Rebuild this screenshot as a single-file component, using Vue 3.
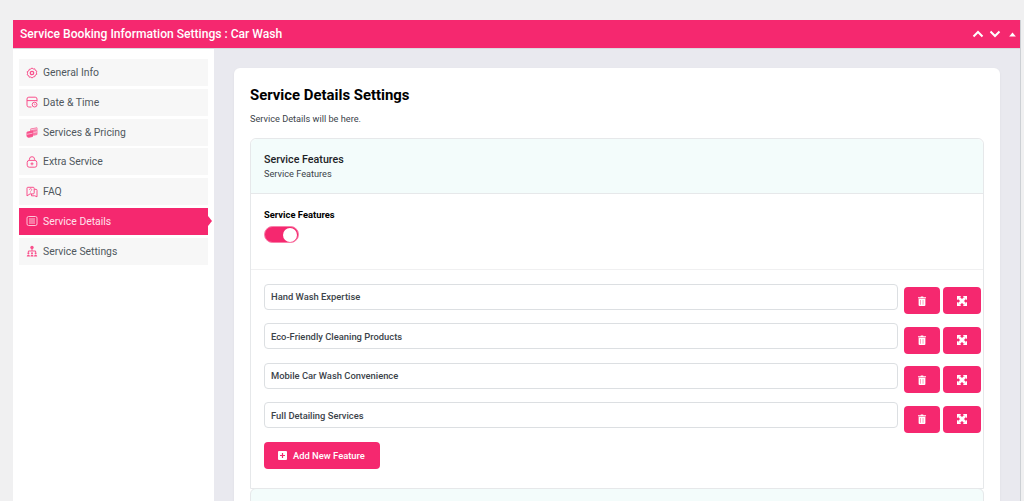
<template>
  <div class="page">
    <div class="panel">
      <div class="panel-head">
        <h2>Service Booking Information Settings : Car Wash</h2>
        <div class="head-icons">
          <svg width="12" height="8" viewBox="0 0 12 8"><path d="M1.5 6.500 6 2l4.500 4.500" fill="none" stroke="#fff" stroke-width="2" /></svg>
          <svg width="12" height="8" viewBox="0 0 12 8"><path d="M1.5 1.500 6 6l4.500-4.500" fill="none" stroke="#fff" stroke-width="2" /></svg>
          <svg width="7" height="5" viewBox="0 0 8 6"><path d="M4 .5 8 5.500H0z" fill="#fff" /></svg>
        </div>
      </div>
      <div class="panel-body">
        <ul class="side">
          <li v-for="item in tabs" :key="item.label" :class="{ active: item.label === 'Service Details' }">
            <svg class="side-icon" width="12" height="12" viewBox="0 0 12 12" fill="none" stroke="currentColor" stroke-width="1" v-html="item.icon"></svg>
            <span>{{ item.label }}</span>
          </li>
        </ul>
        <div class="content">
          <div class="card">
            <h1>Service Details Settings</h1>
            <p class="lead">Service Details will be here.</p>
            <div class="box">
              <div class="box-head">
                <h3>Service Features</h3>
                <p>Service Features</p>
              </div>
              <div class="toggle-row">
                <label>Service Features</label>
                <span class="toggle"><i></i></span>
              </div>
              <div class="features">
                <div class="feature" v-for="f in features" :key="f">
                  <input type="text" :value="f" />
                  <button class="del" type="button">
                    <svg width="8" height="10" viewBox="0 0 9 11"><path d="M0 1.200h2.800L3.200.3h2.600l.4.9H9v1.100H0zM.7 3h7.600v7a1 1 0 0 1-1 1H1.700a1 1 0 0 1-1-1zm1.900 1.300v5.400h.5V4.300zm2.800 0v5.400h.5V4.300z" fill="#fff" fill-rule="evenodd" /></svg>
                  </button>
                  <button class="move" type="button">
                    <svg width="10" height="10" viewBox="0 0 10 10"><path d="M2 2l6 6M8 2 2 8" stroke="#fff" stroke-width="2.800" /><path d="M0 0h4.200L0 4.200zM10 0v4.200L5.800 0zM0 10V5.800L4.200 10zM10 10H5.800L10 5.800z" fill="#fff" /></svg>
                  </button>
                </div>
                <button class="add" type="button">
                  <svg width="9" height="9" viewBox="0 0 9 9"><path d="M1 0h7a1 1 0 0 1 1 1v7a1 1 0 0 1-1 1H1a1 1 0 0 1-1-1V1a1 1 0 0 1 1-1zm2.900 2v1.900H2v1.200h1.900V7h1.200V5.100H7V3.900H5.100V2z" fill="#fff" fill-rule="evenodd" /></svg>
                  Add New Feature
                </button>
              </div>
            </div>
            <div class="box next"></div>
          </div>
        </div>
      </div>
    </div>
  </div>
</template>

<script setup>
const tabs = [
  // gear
  { label: 'General Info', icon: '<path d="M6 .9 7.200 2l1.600-.2.500 1.600 1.500.7-.4 1.600.4 1.600-1.500.7-.5 1.600L7.200 10 6 11.100 4.800 10l-1.600.2-.5-1.600-1.500-.7.400-1.600-.4-1.600 1.500-.7.5-1.600L4.800 2z"/><circle cx="6" cy="6" r="1.700" stroke-width="1.300"/>' },
  // calendar + clock
  { label: 'Date & Time', icon: '<path d="M5.500 11H2.800A1.800 1.800 0 0 1 1 9.200V3a1.800 1.800 0 0 1 1.800-1.800h6.400A1.800 1.800 0 0 1 11 3v2.500M1 4.600h10"/><circle cx="8.600" cy="8.600" r="2.400"/><path d="M8.600 7.600v1.200h1" stroke-width=".7"/>' },
  // coins
  { label: 'Services & Pricing', icon: '<path d="M1 6.200 6.500 5v5.500L2.500 11.300 1 10.500z" fill="currentColor"/><path d="M4.500 3 11 1.800v6.700L7.500 9.300V4.500L4.500 5z" fill="currentColor" opacity=".75"/><path d="M1 8.300l5.500-1.100M4.500 3.800 11 2.800M7.500 6.500 11 5.800" stroke="#f7f7f7" stroke-width=".6"/>' },
  // bag with plus
  { label: 'Extra Service', icon: '<rect x="1.200" y="4.400" width="9.600" height="6.800" rx="2"/><path d="M3.400 4.400V3.300a2.600 2.600 0 0 1 5.200 0v1.100M6 6.300v3M4.500 7.800h3"/>' },
  // speech bubbles
  { label: 'FAQ', icon: '<path d="M1.800 1.300h5.400a1 1 0 0 1 1 1v4.600a1 1 0 0 1-1 1H4L1 9.900V2.100a.8.800 0 0 1 .8-.8z"/><path d="M8.300 3.300H10a1 1 0 0 1 1 1v6.500L8.800 9.800H5.500V8"/><path d="M3.500 3.700a1.100 1.100 0 1 1 1.600 1c-.4.200-.6.400-.6.800M4.500 6.200v.5" stroke-width=".8"/>' },
  // list
  { label: 'Service Details', icon: '<rect x="1" y="1.500" width="10" height="9" rx="1.600"/><path d="M3 4h6M3 6h6M3 8h6"/>' },
  // org chart
  { label: 'Service Settings', icon: '<circle cx="6" cy="2.500" r="1.700" fill="currentColor" stroke="none"/><path d="M6 4v2M2.400 7.500V6h7.200v1.500"/><circle cx="2.400" cy="8.300" r="1" fill="currentColor" stroke="none"/><circle cx="6" cy="8.300" r="1" fill="currentColor" stroke="none"/><circle cx="9.600" cy="8.300" r="1" fill="currentColor" stroke="none"/><path d="M.8 11.500c0-2.200 3.200-2.200 3.200 0zM4.400 11.500c0-2.200 3.200-2.200 3.200 0zM8 11.500c0-2.200 3.200-2.200 3.200 0z" fill="currentColor" stroke="none"/>' }
]

const features = [
  'Hand Wash Expertise',
  'Eco-Friendly Cleaning Products',
  'Mobile Car Wash Convenience',
  'Full Detailing Services'
]
</script>

<style>
html, body {
  margin: 0;
  height: 100%;
  overflow: hidden;
  background: #f0f0f1;
}
</style>

<style scoped>
.page {
  height: 501px;
  overflow: hidden;
  padding: 20px 3px 0 13px;
  box-sizing: border-box;
  font-family: Roboto, "Noto Sans", sans-serif;
  color: #3c434a;
}

.panel {
  border: 1px solid #ccd0d4;
  border-width: 0 1px 0 0;
  height: 600px;
  background: #e9e9ef;
}

.panel-head {
  display: flex;
  align-items: center;
  justify-content: space-between;
  height: 28px;
  background: #f5286f;
  color: #fff;
  padding: 0 4px 0 7px;
  border-bottom: 1px solid #d9d9de;
}

.panel-head h2 {
  margin: 0;
  font-size: 12.100px;
  font-weight: 500;
}

.head-icons {
  display: flex;
  align-items: center;
  gap: 5px;
}

.head-icons svg:last-child {
  margin-left: 3px;
}

.panel-body {
  display: flex;
}

.side {
  list-style: none;
  width: 189px;
  margin: 0;
  padding: 10px 6px;
  background: #fff;
  align-self: stretch;
  height: 600px;
}

.side li {
  position: relative;
  display: flex;
  align-items: center;
  gap: 5px;
  height: 27px;
  margin-bottom: 2.750px;
  padding-left: 7px;
  background: #f7f7f7;
  font-size: 10.400px;
  color: #50575e;
}

.side-icon {
  color: #f9508c;
  flex: none;
}

.side li.active {
  background: #f5286f;
  color: #fff;
}

.side li.active span {
  color: #ffe3ec;
}

.side li.active .side-icon {
  color: #fdc4d8;
}

.side li.active::after {
  content: "";
  position: absolute;
  right: -4px;
  top: 8.500px;
  border-left: 4px solid #f5286f;
  border-top: 5px solid transparent;
  border-bottom: 5px solid transparent;
}

.content {
  flex: 1;
  padding: 19px 20px 0 20px;
}

.card {
  background: #fff;
  border-radius: 6px;
  padding: 17px 16px 16px;
  box-shadow: 0 1px 3px rgba(0, 0, 0, 0.05);
}

.card h1 {
  margin: 0;
  font-size: 14.900px;
  line-height: 20px;
  font-weight: 700;
  color: #000;
}

.lead {
  margin: 7px 0 12px;
  font-size: 9.200px;
  line-height: 14px;
}

.box {
  border: 1px solid #e6e8ea;
  border-radius: 6px 6px 0 0;
}

.box-head {
  background: #f3fcfb;
  height: 55px;
  padding: 13px 13px 0;
  box-sizing: border-box;
  border-radius: 6px 6px 0 0;
  border-bottom: 1px solid #e6e8ea;
}

.box-head h3 {
  margin: 0;
  font-size: 10.700px;
  line-height: 15px;
  font-weight: 500;
  color: #1d2327;
}

.box-head p {
  margin: 0;
  font-size: 9.200px;
  line-height: 13px;
}

.toggle-row {
  height: 76px;
  padding: 15px 13px 0;
  box-sizing: border-box;
  border-bottom: 1px solid #f0f0f1;
}

.toggle-row label {
  display: block;
  font-size: 9.400px;
  line-height: 12px;
  font-weight: 700;
  color: #000;
  margin-bottom: 5px;
}

.toggle {
  display: flex;
  align-items: center;
  justify-content: flex-end;
  width: 35px;
  height: 17px;
  box-sizing: border-box;
  background: #f5286f;
  border-radius: 9px;
  padding-right: 1px;
  border: 1px solid #f97fa9;
}

.toggle i {
  width: 14px;
  height: 14px;
  background: #fff;
  border-radius: 50%;
}

.features {
  padding: 13.600px 2px 0 13px;
  height: 218px;
  box-sizing: border-box;
}

.feature {
  display: flex;
  gap: 3px;
  margin-bottom: 13.500px;
  height: 26px;
}

.feature input {
  flex: 1;
  min-width: 0;
  height: 26px;
  box-sizing: border-box;
  margin-right: 3px;
  border: 1px solid #dcdfe2;
  border-radius: 4px;
  padding: 0 6px;
  font: 500 9.400px Roboto, "Noto Sans", sans-serif;
  color: #3c434a;
  background: #fff;
}

.feature button {
  height: 27px;
  margin-top: 3.500px;
  border: 0;
  border-radius: 4px;
  background: #f5286f;
  display: flex;
  align-items: center;
  justify-content: center;
  padding: 0;
}

.del {
  width: 36px;
}

.move {
  width: 38px;
}

.add {
  display: flex;
  align-items: center;
  gap: 6px;
  height: 27px;
  width: 116px;
  margin-top: 0;
  padding: 0 0 0 14px;
  border: 0;
  border-radius: 4px;
  background: #f5286f;
  color: #fff;
  font: 500 9.400px Roboto, "Noto Sans", sans-serif;
}

.next {
  background: #f3fcfb;
  height: 40px;
  margin-top: -1px;
}
</style>
